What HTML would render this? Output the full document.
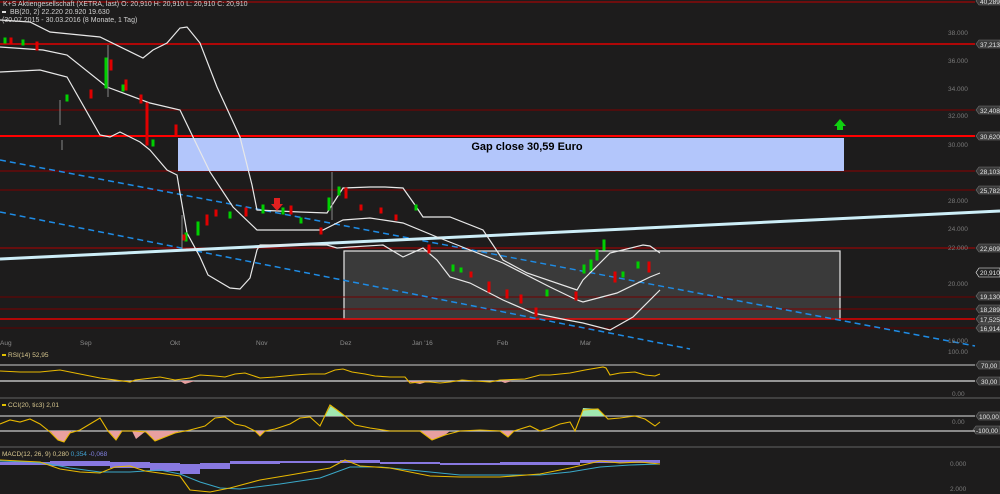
<!DOCTYPE html>
<html><head><meta charset="utf-8"><style>
html,body{margin:0;padding:0;background:#1d1c1c;width:1000px;height:494px;overflow:hidden}
svg{display:block}
text{font-family:"Liberation Sans",sans-serif}
</style></head><body>
<svg width="1000" height="494" viewBox="0 0 1000 494" xmlns="http://www.w3.org/2000/svg">
<rect width="1000" height="494" fill="#1d1c1c"/>
<rect x="344" y="251" width="496" height="68" fill="#3a3a3a" stroke="#e8e8e8" stroke-width="1.2"/>
<g stroke-width="1">
<line x1="0" y1="2" x2="975" y2="2" stroke="#c00000"/>
<line x1="0" y1="44" x2="975" y2="44" stroke="#e00000" stroke-width="1.5"/>
<line x1="0" y1="110" x2="975" y2="110" stroke="#800000"/>
<line x1="0" y1="136" x2="975" y2="136" stroke="#ff0000" stroke-width="2"/>
<line x1="0" y1="171" x2="975" y2="171" stroke="#900000"/>
<line x1="0" y1="190" x2="975" y2="190" stroke="#800000"/>
<line x1="0" y1="248" x2="975" y2="248" stroke="#b00000"/>
<line x1="0" y1="297" x2="975" y2="297" stroke="#700000"/>
<line x1="0" y1="309" x2="975" y2="309" stroke="#800000"/>
<line x1="0" y1="319" x2="975" y2="319" stroke="#e00000" stroke-width="1.5"/>
<line x1="0" y1="328" x2="975" y2="328" stroke="#600000"/>
</g>
<rect x="178" y="138" width="666" height="33" fill="#b3c6fb"/>
<text x="527" y="150" font-size="11" font-weight="bold" fill="#000" text-anchor="middle">Gap close 30,59 Euro</text>
<line x1="0" y1="160" x2="975" y2="346" stroke="#1e8ce6" stroke-width="1.5" stroke-dasharray="6,4"/>
<line x1="0" y1="212" x2="690" y2="349" stroke="#1e8ce6" stroke-width="1.5" stroke-dasharray="6,4"/>
<line x1="0" y1="259" x2="1000" y2="211" stroke="#cdeef8" stroke-width="3"/>
<g fill="none" stroke="#e8e8e8" stroke-width="1.2">
<polyline points="0,20 30,22 50,32 100,37 143,58 153,50 167,43 180,28 187,27 200,43 217,87 240,137 252,185 257,210 300,212 327,213 343,188 370,187 385,187 403,188 415,205 423,217 450,217 483,230 503,260 527,273 577,290 583,280 610,253 643,245 650,246 660,253"/>
<polyline points="0,47 43,50 67,55 107,87 150,103 180,110 193,137 210,172 233,207 257,230 323,230 343,220 370,218 403,223 437,237 470,250 503,263 550,287 577,300 583,302 617,293 650,277 660,273"/>
<polyline points="0,72 40,70 67,77 100,135 110,137 120,132 140,142 150,150 167,170 177,175 180,193 187,233 200,257 208,275 230,288 240,289 250,278 257,250 260,245 327,245 337,248 350,247 383,245 403,257 423,248 437,260 450,277 470,283 503,300 533,313 567,320 583,323 610,330 633,317 660,290"/>
</g>
<g stroke-width="1">
<g stroke="#888"><line x1="108" y1="45" x2="108" y2="97"/><line x1="182" y1="215" x2="182" y2="248"/><line x1="332" y1="172" x2="332" y2="220"/><line x1="60" y1="100" x2="60" y2="125"/><line x1="62" y1="140" x2="62" y2="150"/></g>
<g fill="#00d000" stroke="#00d000">
<rect x="4" y="38" width="2" height="5"/><rect x="22" y="40" width="2" height="5"/><rect x="66" y="95" width="2" height="6"/><rect x="105" y="58" width="2" height="30"/><rect x="122" y="85" width="2" height="6"/><rect x="152" y="140" width="2" height="6"/>
<rect x="185" y="233" width="2" height="8"/><rect x="197" y="222" width="2" height="13"/><rect x="229" y="212" width="2" height="6"/><rect x="262" y="205" width="2" height="8"/><rect x="282" y="208" width="2" height="6"/><rect x="300" y="218" width="2" height="5"/>
<rect x="328" y="198" width="2" height="12"/><rect x="338" y="187" width="2" height="8"/><rect x="415" y="205" width="2" height="5"/><rect x="452" y="265" width="2" height="6"/><rect x="460" y="268" width="2" height="4"/><rect x="546" y="290" width="2" height="6"/><rect x="583" y="265" width="2" height="8"/><rect x="590" y="260" width="2" height="10"/><rect x="596" y="250" width="2" height="10"/><rect x="603" y="240" width="2" height="10"/><rect x="622" y="272" width="2" height="5"/><rect x="637" y="262" width="2" height="6"/>
</g>
<g fill="#e00000" stroke="#e00000">
<rect x="10" y="38" width="2" height="5"/><rect x="36" y="42" width="2" height="8"/><rect x="90" y="90" width="2" height="8"/><rect x="110" y="60" width="2" height="10"/><rect x="125" y="80" width="2" height="10"/><rect x="140" y="95" width="2" height="8"/><rect x="146" y="103" width="2" height="42"/><rect x="175" y="125" width="2" height="10"/>
<rect x="183" y="235" width="2" height="5"/><rect x="206" y="215" width="2" height="10"/><rect x="215" y="210" width="2" height="6"/><rect x="245" y="208" width="2" height="8"/><rect x="290" y="206" width="2" height="8"/><rect x="320" y="228" width="2" height="6"/><rect x="345" y="188" width="2" height="10"/><rect x="360" y="205" width="2" height="5"/><rect x="380" y="208" width="2" height="5"/><rect x="395" y="215" width="2" height="5"/><rect x="428" y="245" width="2" height="8"/><rect x="470" y="272" width="2" height="5"/><rect x="488" y="282" width="2" height="10"/><rect x="506" y="290" width="2" height="8"/><rect x="520" y="295" width="2" height="8"/><rect x="535" y="308" width="2" height="8"/><rect x="575" y="292" width="2" height="8"/><rect x="614" y="272" width="2" height="10"/><rect x="648" y="262" width="2" height="10"/>
</g>
<path d="M274 198 h6 v6 h3 l-6 7 l-6 -7 h3z" fill="#e02020"/>
<path d="M837 130 h6 v-4 h3 l-6 -7 l-6 7 h3z" fill="#10d010"/>
</g>
<g font-size="7" fill="#d0d0d0">
<text x="3" y="6">K+S Aktiengesellschaft (XETRA, last) O: 20,910 H: 20,910 L: 20,910 C: 20,910</text>
<rect x="2" y="11" width="4" height="2" fill="#ddd"/><text x="10" y="14">BB(20, 2) 22.220 20.920 19.630</text>
<text x="2" y="22">(30.07.2015 - 30.03.2016 (8 Monate, 1 Tag)</text>
</g>
<g font-size="6.5" fill="#7a7a7a">
<text x="948" y="35">38.000</text><text x="948" y="63">36.000</text><text x="948" y="91">34.000</text><text x="948" y="118">32.000</text><text x="948" y="147">30.000</text><text x="948" y="203">28.000</text><text x="948" y="231">24.000</text><text x="948" y="250">22.000</text><text x="948" y="286">20.000</text><text x="948" y="343">16.000</text><text x="948" y="354">100.00</text><text x="952" y="396">0.00</text><text x="952" y="424">0.00</text><text x="950" y="466">0.000</text><text x="950" y="491">2.000</text>
</g>
<g font-size="6.5" fill="#e8e8e8">
<g fill="#3a3a3a" stroke="#777" stroke-width="0.6">
<path d="M979,-3h21v8h-21l-3,-4z"/>
<path d="M979,40h21v8h-21l-3,-4z"/><path d="M979,106h21v8h-21l-3,-4z"/><path d="M979,132h21v8h-21l-3,-4z"/><path d="M979,167h21v8h-21l-3,-4z"/><path d="M979,186h21v8h-21l-3,-4z"/><path d="M979,244h21v8h-21l-3,-4z"/><path d="M979,268h21v9h-21l-3,-4.5z" fill="#222" stroke="#fff"/><path d="M979,292h21v8h-21l-3,-4z"/><path d="M979,305h21v8h-21l-3,-4z"/><path d="M979,315h21v8h-21l-3,-4z"/><path d="M979,324h21v8h-21l-3,-4z"/><path d="M979,361h21v8h-21l-3,-4z"/><path d="M979,377h21v8h-21l-3,-4z"/><path d="M979,412h21v8h-21l-3,-4z"/><path d="M976,426h24v8h-24l-3,-4z"/>
</g>
<text x="980" y="4">40,289</text><text x="980" y="47">37,213</text><text x="980" y="113">32,408</text><text x="980" y="139">30,620</text><text x="980" y="174">28,103</text><text x="980" y="193">25,782</text><text x="980" y="251">22,609</text><text x="980" y="275">20,910</text><text x="980" y="299">19,130</text><text x="980" y="312">18,289</text><text x="980" y="322">17,525</text><text x="980" y="331">16,914</text><text x="981" y="368">70,00</text><text x="981" y="384">30,00</text><text x="979" y="419">100,00</text><text x="976" y="433">-100,00</text>
</g>
<g font-size="6.5" fill="#8a8a8a">
<text x="0" y="345">Aug</text><text x="80" y="345">Sep</text><text x="170" y="345">Okt</text><text x="256" y="345">Nov</text><text x="340" y="345">Dez</text><text x="412" y="345">Jan '16</text><text x="497" y="345">Feb</text><text x="580" y="345">Mar</text>
</g>
<g stroke-width="1.2">
<line x1="0" y1="365" x2="975" y2="365" stroke="#aaa"/>
<line x1="0" y1="381" x2="975" y2="381" stroke="#ddd"/>
<line x1="0" y1="398" x2="1000" y2="398" stroke="#555"/>
<line x1="0" y1="416" x2="975" y2="416" stroke="#bbb"/>
<line x1="0" y1="431" x2="975" y2="431" stroke="#ccc"/>
<line x1="0" y1="447" x2="1000" y2="447" stroke="#555"/>
</g>
<g font-size="6.5">
<rect x="2" y="354" width="4" height="2" fill="#e0c000"/><text x="8" y="357" fill="#d8c890">RSI(14) 52,95</text>
<rect x="2" y="404" width="4" height="2" fill="#e0c000"/><text x="8" y="407" fill="#d8c890">CCI(20, tic3) 2,01</text>
<text x="2" y="456" fill="#d8c890">MACD(12, 26, 9) 0,280 <tspan fill="#40a0d0">0,354</tspan> <tspan fill="#8080e0">-0,068</tspan></text>
</g>
<path d="M180,381 L185,384 L195,381z M405,381 L420,384 L430,381z M500,381 L505,383 L512,381z" fill="#e8a0a0"/>
<polyline fill="none" stroke="#e8b800" stroke-width="1.1" points="0,371 20,372 40,372 60,370 80,374 100,378 130,382 135,380 160,377 175,380 190,378 200,375 215,376 225,377 235,374 245,373 260,378 275,377 295,375 310,374 325,374 335,370 343,369 352,372 365,374 375,376 390,377 405,377 410,383 420,382 430,382 440,383 450,382 462,380 475,381 490,382 500,380 525,379 540,375 550,375 570,373 585,370 603,367 606,368 610,375 620,373 635,372 645,375 655,376 660,374"/>
<path d="M50,431 L58,440 L64,442 L70,433 L72,431z M108,431 L116,440 L122,431z M132,431 L136,439 L146,431z M145,431 L155,441 L175,433 L180,431z M255,431 L260,436 L265,431z M420,431 L432,440 L445,435 L450,431z M500,431 L508,437 L514,431z" fill="#e8a0a0"/>
<path d="M325,416 L331,405 L337,410 L345,416z M581,416 L583,408 L598,409 L605,416z" fill="#a0e8b0"/>
<polyline fill="none" stroke="#e8b800" stroke-width="1.1" points="0,424 10,420 20,422 30,419 40,424 50,432 58,440 64,442 70,433 80,430 90,424 100,418 108,431 116,440 122,431 135,431 146,432 155,441 165,437 175,433 190,430 205,426 215,418 225,417 235,424 245,426 255,431 260,436 265,431 275,429 290,424 300,418 310,417 320,426 330,405 337,410 345,416 355,425 370,428 390,431 420,431 432,440 445,435 460,431 480,430 500,431 508,437 514,431 530,426 540,431 550,428 560,424 570,422 575,431 583,410 598,409 608,419 620,418 635,416 645,419 655,426 660,422"/>
<g fill="#8878e0">
<rect x="0" y="462" width="50" height="3"/><rect x="50" y="461" width="60" height="5"/><rect x="110" y="462" width="40" height="6"/><rect x="150" y="463" width="30" height="8"/><rect x="180" y="464" width="20" height="10"/><rect x="200" y="463" width="30" height="6"/><rect x="230" y="461" width="50" height="3"/><rect x="280" y="461" width="60" height="2"/><rect x="340" y="460" width="40" height="3"/><rect x="380" y="462" width="60" height="2"/><rect x="440" y="463" width="60" height="2"/><rect x="500" y="462" width="80" height="3"/><rect x="580" y="460" width="80" height="3"/>
</g>
<polyline fill="none" stroke="#3aa8c8" stroke-width="1.1" points="0,461 30,462 50,464 70,468 100,472 130,472 160,470 180,474 200,482 220,488 240,489 280,484 320,478 350,467 380,467 420,471 460,475 500,475 540,475 570,472 600,467 630,465 660,464"/>
<polyline fill="none" stroke="#e8b800" stroke-width="1.1" points="0,460 40,462 60,469 80,472 100,473 115,467 130,466 145,471 180,476 190,490 210,492 230,488 260,480 290,475 330,468 345,460 360,466 390,468 430,476 460,477 500,477 540,474 570,468 600,461 620,463 640,462 660,464"/>
</svg>
</body></html>
